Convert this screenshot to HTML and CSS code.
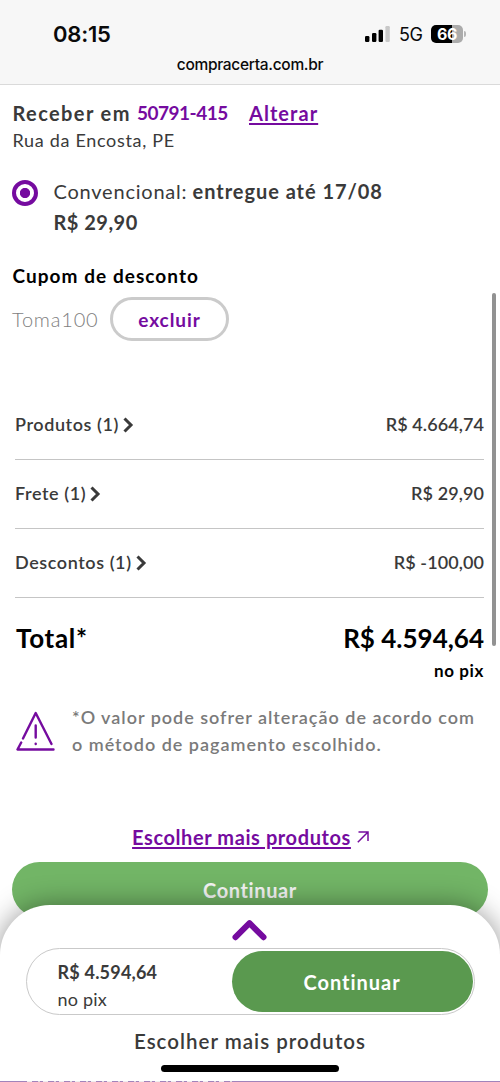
FILE: index.html
```
<!DOCTYPE html>
<html lang="pt-BR">
<head>
<meta charset="utf-8">
<title>Compra Certa</title>
<link rel="stylesheet" href="styles.css">
</head>
<body>
<div class="screen">
  <header class="browser">
    <div class="status">
      <span class="time">08:15</span>
      <div class="indicators">
        <svg class="signal" width="25" height="16" viewBox="0 0 25 16"><rect x="0" y="10" width="4.4" height="6" rx="1.2"/><rect x="7" y="7" width="4.4" height="9" rx="1.2"/><rect x="13.6" y="3.7" width="4.4" height="12.3" rx="1.2"/><rect x="20.4" y="0" width="4.4" height="16" rx="1.2" fill="#c8c8c8"/></svg>
        <span class="network">5G</span>
        <span class="battery">66</span><i class="battery-tip"></i>
      </div>
    </div>
    <div class="url">compracerta.com.br</div>
  </header>

  <main>
    <section class="address">
      <div class="address-line"><b class="receive">Receber em</b><b class="zip">50791-415</b><a class="change">Alterar</a></div>
      <div class="street">Rua da Encosta, PE</div>
    </section>

    <section class="shipping">
      <span class="radio"></span>
      <div>
        <div><span class="method">Convencional:</span> <b class="eta">entregue até 17/08</b></div>
        <b class="ship-price">R$ 29,90</b>
      </div>
    </section>

    <h2 class="coupon-title">Cupom de desconto</h2>
    <div class="coupon"><span class="code">Toma100</span><span class="remove">excluir</span></div>

    <section class="summary">
      <div class="row"><span class="label">Produtos (1)<svg class="chev" width="11" height="16" viewBox="0 0 11 16"><path d="M1.5 1.5L8 8l-6.500 6.500"/></svg></span><span class="value">R$ 4.664,74</span></div>
      <div class="row"><span class="label">Frete (1)<svg class="chev" width="11" height="16" viewBox="0 0 11 16"><path d="M1.5 1.5L8 8l-6.500 6.500"/></svg></span><span class="value">R$ 29,90</span></div>
      <div class="row"><span class="label">Descontos (1)<svg class="chev" width="11" height="16" viewBox="0 0 11 16"><path d="M1.5 1.5L8 8l-6.500 6.500"/></svg></span><span class="value">R$ -100,00</span></div>
      <div class="total"><span class="total-label">Total*</span><span>R$ 4.594,64</span></div>
      <div class="total-pix">no pix</div>
      <div class="note">
        <svg class="warn" width="40" height="41" viewBox="0 0 40 41"><path d="M7 27.500L19.700 2l15.800 31M5.200 31.500L1.500 38.500h36M19.700 14.500v12M19.700 32.600v.4"/></svg>
        <p>*O valor pode sofrer alteração de acordo com<br>o método de pagamento escolhido.</p>
      </div>
    </section>

    <div class="more"><a>Escolher mais produtos</a><svg width="12" height="12" viewBox="0 0 12 12"><path d="M.8 11.200L11 1M1.500 1H11v9"/></svg></div>
    <div class="continue">Continuar</div>
  </main>

  <div class="scrollbar"></div>

  <aside class="sheet">
    <svg class="up" width="36" height="22" viewBox="0 0 36 22"><path d="M3.500 18.200L17.500 4.200l14 14"/></svg>
    <div class="pill">
      <div class="pill-price"><b>R$ 4.594,64</b><span>no pix</span></div>
      <div class="pill-button">Continuar</div>
    </div>
    <div class="sheet-more">Escolher mais produtos</div>
    <div class="home"></div>
  </aside>
  <div class="footer-edge"></div>
</div>
</body>
</html>
```
FILE: styles.css
```
* { box-sizing: border-box; }
body { margin: 0; background: #fff; }
.screen {
  position: relative; width: 500px; height: 1082px; overflow: hidden;
  font-family: Lato, "Open Sans", sans-serif; color: #3a3a3a;
  white-space: nowrap;
}
h2, p { margin: 0; }

.browser {
  height: 85px; background: #f7f7f7; border-bottom: 1px solid #dadada;
  font-family: Inter, sans-serif; color: #0a0a0a;
}
.status { display: flex; justify-content: space-between; height: 50px; padding: 20px 34px 0 53px; }
.time { font-size: 22px; line-height: 28px; font-weight: 600; letter-spacing: -.2px; }
.indicators { display: flex; align-items: center; height: 28px; }
.signal { margin-right: 9px; }
.network { width: 32px; font-size: 18px; letter-spacing: -.5px; }
.battery {
  width: 32px; height: 18px; border-radius: 5px;
  background: linear-gradient(90deg, #000 66%, #ababab 66%);
  color: #fff; font-size: 16px; font-weight: 700; line-height: 18px; text-align: center; letter-spacing: -.4px;
}
.battery-tip { width: 2px; height: 6px; margin-left: 1px; border-radius: 0 2px 2px 0; background: #b5b5b5; }
.url { text-align: center; font-size: 15.5px; line-height: 29px; font-weight: 500; letter-spacing: -.3px; }

.address { padding: 14px 12.5px 0; }
.address-line { display: flex; line-height: 28px; font-size: 20px; }
.receive { width: 124.500px; letter-spacing: 1.39px; }
.zip { width: 112px; font-size: 19px; letter-spacing: -.5px; color: #750b9f; }
.change { font-weight: 700; letter-spacing: 1.05px; color: #750b9f; text-decoration: underline; text-decoration-thickness: 1.5px; text-underline-offset: 2px; }
.street { font-size: 18px; line-height: 26px; letter-spacing: .68px; }

.shipping { display: flex; margin-top: 23px; padding-left: 12px; font-size: 20px; line-height: 31px; }
.radio {
  width: 26px; height: 26px; margin: 4px 15.500px 0 0; border-radius: 50%; border: 4px solid #750b9f;
  background: radial-gradient(circle, #750b9f 4.700px, #fff 5.500px);
}
.method { letter-spacing: .78px; }
.eta { letter-spacing: .96px; }
.ship-price { letter-spacing: .48px; }

.coupon-title { margin-top: 26px; padding-left: 12.500px; font-size: 19px; line-height: 24px; font-weight: 700; letter-spacing: 1.05px; color: #000; }
.coupon { display: flex; align-items: center; margin-top: 9px; padding-left: 12px; }
.code { width: 98px; font-size: 20px; font-weight: 300; letter-spacing: .8px; color: #7e7e7e; }
.remove {
  width: 119px; height: 44px; border: 3px solid #cbcbcb; border-radius: 22px;
  text-align: center; line-height: 39px; font-size: 19px; font-weight: 700; letter-spacing: .92px; color: #750b9f;
}

.summary { padding: 50px 16px 0 15px; font-size: 18px; font-weight: 600; }
.row { display: flex; justify-content: space-between; align-items: center; height: 69px; padding-bottom: 3px; border-bottom: 1px solid #c5c5c5; }
.label { display: flex; align-items: center; letter-spacing: .58px; }
.chev { margin: 3px 0 0 4px; fill: none; stroke: #3a3a3a; stroke-width: 3; }
.value { letter-spacing: .08px; }
.total { display: flex; justify-content: space-between; margin-top: 23px; font-size: 26px; line-height: 34px; font-weight: 700; color: #000; }
.total-label { padding-left: 1px; letter-spacing: .7px; }
.total-pix { margin-top: 4px; text-align: right; font-size: 17px; line-height: 24px; font-weight: 700; letter-spacing: .6px; color: #000; }
.note { display: flex; margin-top: 21px; line-height: 27px; letter-spacing: .98px; color: #7a7a7a; }
.warn { margin: 7px 16px 0 1px; fill: none; stroke: #750b9f; stroke-width: 2.400; stroke-linecap: round; stroke-linejoin: round; }

.more { display: flex; justify-content: center; margin-top: 64px; padding-left: 1px; line-height: 30px; font-size: 20px; font-weight: 700; letter-spacing: .59px; color: #750b9f; }
.more a { text-decoration: underline; text-decoration-thickness: 1.5px; text-underline-offset: 2px; }
.more svg { margin: 9px 0 0 6px; fill: none; stroke: #750b9f; stroke-width: 1.500; }
.continue {
  height: 55px; margin: 10px 12px 0; border-radius: 28px; background: #72b566;
  text-align: center; line-height: 57px; font-size: 20px; font-weight: 700; letter-spacing: .62px; color: #f6f6f6;
}

/* Overlay scroll indicator and bottom sheet */
.scrollbar { position: absolute; left: 492px; top: 293px; width: 4px; height: 353px; border-radius: 2px; background: #929292; }
.sheet {
  position: absolute; left: 0; right: 0; bottom: 1px; height: 176px;
  display: flex; flex-direction: column; align-items: center;
  border-radius: 50px 50px 0 0; background: #fff; box-shadow: 0 0 28px rgba(0,0,0,.42);
}
.up { margin-top: 14px; fill: none; stroke: #750b9f; stroke-width: 6; stroke-linecap: round; stroke-linejoin: round; }
.pill { display: flex; justify-content: space-between; width: 449px; height: 67px; margin-top: 7px; padding: 2px 1px 2px 0; border: 1px solid #c9c9c9; border-radius: 34px; }
.pill-price { display: flex; flex-direction: column; padding: 8px 0 0 31px; font-size: 18px; line-height: 27px; letter-spacing: .2px; }
.pill-button { width: 241px; height: 61px; border-radius: 31px; background: #5a994f; color: #fff; text-align: center; line-height: 62px; font-size: 20px; font-weight: 700; letter-spacing: .98px; }
.sheet-more { margin-top: 12px; line-height: 28px; font-size: 20.5px; font-weight: 600; letter-spacing: 1.02px; }
.home { width: 178px; height: 7px; margin-top: 10px; border-radius: 4px; background: #000; }
.footer-edge {
  position: absolute; left: 0; right: 0; bottom: 0; height: 1px;
  background: repeating-linear-gradient(90deg, #eee 0 5px, #a184bb 5px 11px, #ddd 11px 13px, #a184bb 13px 16px) 27px 0 / 208px 1px no-repeat #a184bb;
}
```
